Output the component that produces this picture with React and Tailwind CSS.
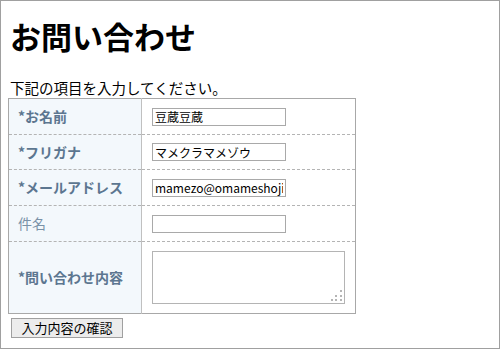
import React from 'react';

const rows = [
  { label: '*お名前', required: true, value: '豆蔵豆蔵', h: 'h-[36px]' },
  { label: '*フリガナ', required: true, value: 'マメクラマメゾウ', h: 'h-[35px]' },
  { label: '*メールアドレス', required: true, value: 'mamezo@omameshoji.co.jp', h: 'h-[36px]' },
  { label: '件名', required: false, value: '', h: 'h-[36px]' },
];

// textarea resize grip (dotted triangle)
const Grip = () => (
  <svg className="absolute right-[2px] bottom-[2px]" width="12" height="12" viewBox="0 0 12 12">
    <rect x="9" y="0" width="2" height="2" fill="#b5b5b5" />
    <rect x="4" y="5" width="2" height="2" fill="#b5b5b5" />
    <rect x="9" y="5" width="2" height="2" fill="#b5b5b5" />
    <rect x="0" y="9" width="2" height="2" fill="#b5b5b5" />
    <rect x="4" y="9" width="2" height="2" fill="#b5b5b5" />
    <rect x="9" y="9" width="2" height="2" fill="#b5b5b5" />
  </svg>
);

export default function App() {
  const font = { fontFamily: '"Noto Sans CJK JP", "Noto Sans", sans-serif' };

  return (
    <div
      className="w-[500px] h-[349px] border border-[#a0a0a0] bg-white text-black pl-[7px] pt-[17px] overflow-hidden"
      style={font}
    >
      <h1 className="text-[31px] font-bold leading-[36px] ml-[2px]">お問い合わせ</h1>
      <p className="mt-[24px] text-[14.5px] leading-[20px] ml-[2px]">下記の項目を入力してください。</p>

      <table className="w-[348px] border-collapse border border-[#a8a8a8]">
        <tbody>
          {rows.map((row, i) => (
            <tr key={i} className={`${row.h} border-b border-dashed border-[#b4b4b4]`}>
              <th
                className={`w-[133px] bg-[#f3f8fc] border-r border-[#c0c0c0] text-left align-middle pl-[9px] text-[14px] ${
                  row.required ? 'font-bold text-[#5c7690]' : 'font-normal text-[#7a92a8]'
                }`}
              >
                {row.label}
              </th>
              <td className="pl-[10px] align-middle">
                <input
                  readOnly
                  value={row.value}
                  className="block w-[134px] h-[18px] border border-[#a9a9a9] bg-white px-[2px] text-[12px] leading-[16px] text-black outline-none"
                />
              </td>
            </tr>
          ))}
          <tr className="h-[72px]">
            <th className="w-[133px] bg-[#f3f8fc] border-r border-[#c0c0c0] text-left align-middle pl-[9px] text-[14px] font-bold text-[#5c7690]">
              *問い合わせ内容
            </th>
            <td className="pl-[10px] align-middle">
              <div className="relative w-[193px] h-[53px]">
                <textarea
                  readOnly
                  className="block w-full h-full border border-[#b4b4b4] bg-white resize-none outline-none"
                />
                <Grip />
              </div>
            </td>
          </tr>
        </tbody>
      </table>

      <button className="mt-[4px] ml-[3px] w-[112px] h-[20px] border border-[#a0a0a0] bg-[#ececec] text-[13px] leading-[18px] text-black">
        入力内容の確認
      </button>
    </div>
  );
}
